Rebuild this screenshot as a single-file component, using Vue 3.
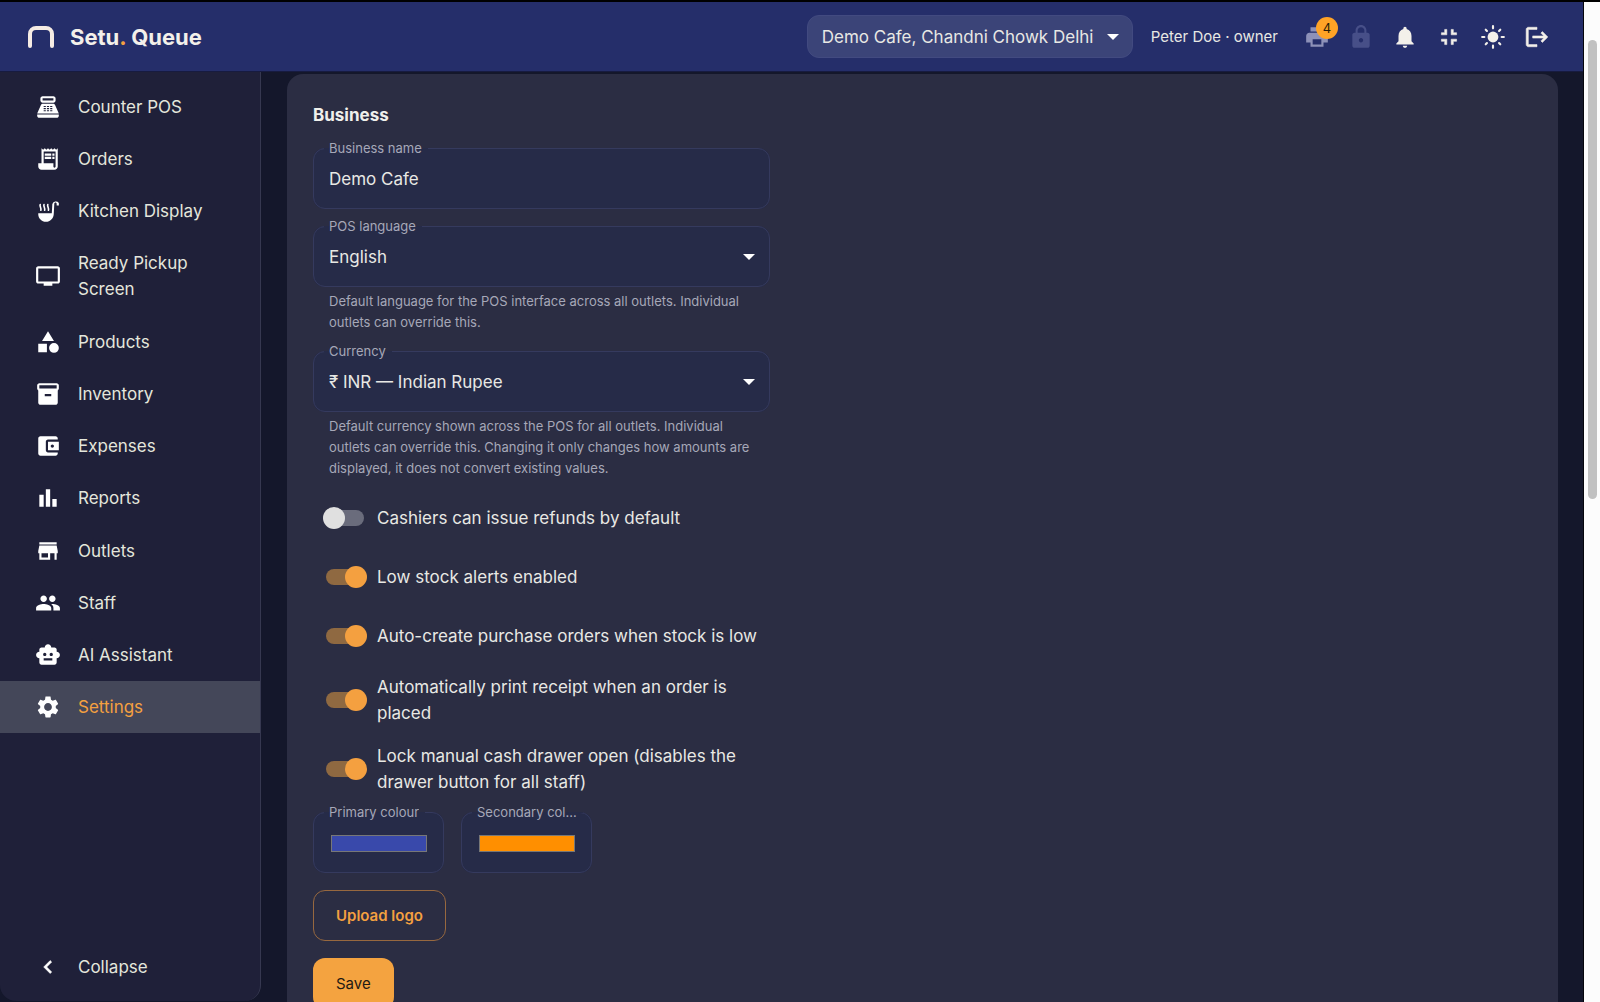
<script setup>
import { reactive, ref } from 'vue'

const navGroups = [
  [
    {
      label: 'Counter POS',
      path: 'M17 2H7c-1.1 0-2 .9-2 2v2c0 1.1.9 2 2 2h10c1.1 0 2-.9 2-2V4c0-1.1-.9-2-2-2m0 4H7V4h10zm3 16H4c-1.1 0-2-.9-2-2v-1h20v1c0 1.1-.9 2-2 2m-1.47-11.81C18.21 9.47 17.49 9 16.7 9H7.3c-.79 0-1.51.47-1.83 1.19L2 18h20zM8 11h2v1H8zm0 2h2v1H8zm0 2h2v1H8zm3-4h2v1h-2zm0 2h2v1h-2zm0 2h2v1h-2zm3-4h2v1h-2zm0 2h2v1h-2zm0 2h2v1h-2z'
    },
    {
      label: 'Orders',
      path: 'M19.5 3.5 18 2l-1.5 1.5L15 2l-1.5 1.5L12 2l-1.5 1.5L9 2 7.5 3.5 6 2v14H3v3c0 1.66 1.34 3 3 3h12c1.66 0 3-1.34 3-3V2zM19 19c0 .55-.45 1-1 1s-1-.45-1-1v-3H8V5h11zM9 7h6v2H9zm7 0h2v2h-2zm-7 3h6v2H9zm7 0h2v2h-2z'
    },
    {
      label: 'Kitchen Display',
      path: 'M3 14h12.500l.500-8.500A3.500 3.500 0 0 1 22 4.500V7h-2V5.500c0-.8-.5-1.300-1.100-1.300s-1.100.5-1.100 1.300L17.300 15c-.2 3.900-3.300 7-7.200 7S3 18.900 3 15z',
      lines: 'M4.800 6c-.8 1.700 1.300 3.300.6 5.300M8.300 6c-.8 1.700 1.300 3.300.6 5.300M11.800 6c-.8 1.700 1.300 3.300.6 5.300'
    },
    {
      label: 'Ready Pickup Screen',
      path: 'M21 3H3c-1.1 0-2 .9-2 2v12c0 1.1.9 2 2 2h5v2h8v-2h5c1.1 0 2-.9 2-2V5c0-1.1-.9-2-2-2m0 14H3V5h18z'
    }
  ],
  [
    {
      label: 'Products',
      path: 'm12 2-5.500 9h11zM3 13.500h8v8H3zM17.500 13a4.500 4.500 0 1 0 0 9 4.500 4.500 0 0 0 0-9z'
    },
    {
      label: 'Inventory',
      path: 'M20 2H4c-1 0-2 .9-2 2v3.010c0 .72.43 1.340 1 1.690V20c0 1.100 1.100 2 2 2h14c.9 0 2-.9 2-2V8.700c.57-.35 1-.97 1-1.690V4c0-1.100-1-2-2-2m-5 12H9v-2h6zm5-7H4V4h16z'
    },
    {
      label: 'Expenses',
      path: 'M21 18v1c0 1.100-.9 2-2 2H5c-1.110 0-2-.9-2-2V5c0-1.100.89-2 2-2h14c1.100 0 2 .9 2 2v1h-9c-1.110 0-2 .9-2 2v8c0 1.100.89 2 2 2zm-9-2h10V8H12zm4-2.500c-.83 0-1.500-.67-1.500-1.500s.67-1.500 1.500-1.500 1.500.67 1.500 1.500-.67 1.500-1.500 1.500'
    },
    { label: 'Reports', path: 'M4 9h4v11H4zm12 4h4v7h-4zm-6-9h4v16h-4z' }
  ],
  [
    {
      label: 'Outlets',
      path: 'M20 4H4v2h16zm1 10v-2l-1-5H4l-1 5v2h1v6h10v-6h4v6h2v-6zm-9 4H6v-4h6z'
    },
    {
      label: 'Staff',
      path: 'M16 11c1.660 0 2.990-1.340 2.990-3S17.660 5 16 5s-3 1.340-3 3 1.340 3 3 3m-8 0c1.660 0 2.990-1.340 2.990-3S9.660 5 8 5 5 6.340 5 8s1.340 3 3 3m0 2c-2.330 0-7 1.170-7 3.500V19h14v-2.500c0-2.330-4.670-3.500-7-3.500m8 0c-.29 0-.62.02-.97.05 1.160.84 1.970 1.970 1.970 3.450V19h6v-2.500c0-2.330-4.670-3.500-7-3.500'
    },
    {
      label: 'AI Assistant',
      path: 'M20 9V7c0-1.100-.9-2-2-2h-3c0-1.660-1.340-3-3-3S9 3.340 9 5H6c-1.100 0-2 .9-2 2v2c-1.660 0-3 1.340-3 3s1.340 3 3 3v4c0 1.100.9 2 2 2h12c1.100 0 2-.9 2-2v-4c1.660 0 3-1.340 3-3s-1.340-3-3-3M7.500 11.500c0-.83.67-1.500 1.500-1.500s1.500.67 1.500 1.500S9.830 13 9 13s-1.500-.67-1.500-1.500M16 17H8v-2h8zm-1-4c-.83 0-1.500-.67-1.500-1.500S14.170 10 15 10s1.500.67 1.500 1.500S15.830 13 15 13'
    },
    {
      label: 'Settings',
      active: true,
      path: 'M19.14 12.94c.04-.3.06-.61.06-.94 0-.32-.02-.64-.07-.94l2.03-1.58c.18-.14.23-.41.12-.61l-1.92-3.32c-.12-.22-.37-.29-.59-.22l-2.39.96c-.5-.38-1.03-.7-1.62-.94l-.36-2.54c-.04-.24-.24-.41-.48-.41h-3.84c-.24 0-.43.17-.47.41l-.36 2.54c-.59.24-1.13.57-1.62.94l-2.39-.96c-.22-.08-.47 0-.59.22L2.74 8.87c-.12.21-.08.47.12.61l2.03 1.58c-.05.3-.09.63-.09.94s.02.64.07.94l-2.03 1.58c-.18.14-.23.41-.12.61l1.92 3.32c.12.22.37.29.59.22l2.39-.96c.5.38 1.03.7 1.62.94l.36 2.54c.05.24.24.41.48.41h3.84c.24 0 .44-.17.47-.41l.36-2.54c.59-.24 1.13-.56 1.62-.94l2.39.96c.22.08.47 0 .59-.22l1.92-3.32c.12-.22.07-.47-.12-.61zM12 15.600c-1.980 0-3.600-1.620-3.600-3.600s1.620-3.600 3.600-3.600 3.600 1.620 3.600 3.600-1.620 3.600-3.600 3.600'
    }
  ]
]

const actions = [
  {
    label: 'Printer',
    tone: 'muted',
    badge: 4,
    path: 'M19 8H5c-1.660 0-3 1.340-3 3v6h4v4h12v-4h4v-6c0-1.660-1.340-3-3-3m-3 11H8v-5h8zm3-7c-.55 0-1-.45-1-1s.45-1 1-1 1 .45 1 1-.45 1-1 1m-1-9H6v4h12z'
  },
  {
    label: 'Lock',
    tone: 'faint',
    path: 'M18 8h-1V6c0-2.760-2.240-5-5-5S7 3.240 7 6v2H6c-1.100 0-2 .9-2 2v10c0 1.100.9 2 2 2h12c1.100 0 2-.9 2-2V10c0-1.100-.9-2-2-2m-6 9c-1.100 0-2-.9-2-2s.9-2 2-2 2 .9 2 2-.9 2-2 2m3.100-9H8.900V6c0-1.710 1.390-3.100 3.100-3.100s3.100 1.390 3.100 3.100z'
  },
  {
    label: 'Notifications',
    path: 'M12 22c1.100 0 2-.9 2-2h-4c0 1.100.89 2 2 2m6-6v-5c0-3.070-1.640-5.640-4.500-6.320V4c0-.83-.67-1.500-1.500-1.500s-1.500.67-1.500 1.500v.68C7.630 5.360 6 7.920 6 11v5l-2 2v1h16v-1z'
  },
  {
    label: 'Exit fullscreen',
    path: 'M5 16h3v3h2v-5H5zm3-8H5v2h5V5H8zm6 11h2v-3h3v-2h-5zm2-11V5h-2v5h5V8z',
    bold: true
  },
  {
    label: 'Light mode',
    path: 'M12 7a5 5 0 1 0 0 10 5 5 0 0 0 0-10z',
    lines: 'M2 12h2M20 12h2M12 2v2M12 20v2M5.300 5.300l1.100 1.100M17.600 17.600l1.100 1.100M5.300 18.700l1.100-1.100M17.600 6.400l1.100-1.100'
  },
  {
    label: 'Log out',
    path: 'm17 7-1.410 1.410L18.170 11H8v2h10.170l-2.580 2.580L17 17l5-5zM4 5h8V3H4c-1.100 0-2 .9-2 2v14c0 1.100.9 2 2 2h8v-2H4z',
    bold: true
  }
]

const businessName = ref('Demo Cafe')
const switches = reactive([
  { id: 'refunds', label: 'Cashiers can issue refunds by default', on: false },
  { id: 'low-stock', label: 'Low stock alerts enabled', on: true },
  { id: 'auto-po', label: 'Auto-create purchase orders when stock is low', on: true },
  { id: 'auto-print', label: 'Automatically print receipt when an order is placed', on: true },
  { id: 'lock-drawer', label: 'Lock manual cash drawer open (disables the drawer button for all staff)', on: true }
])
const colours = reactive([
  { id: 'primary', label: 'Primary colour', value: '#3949ab' },
  { id: 'secondary', label: 'Secondary colour', value: '#ff8f00' }
])
</script>

<template>
  <div class="window">
    <div class="app">
      <header class="topbar">
        <a class="brand" href="#">
          <svg class="brand-mark" viewBox="0 0 26 22" aria-hidden="true">
            <path d="M2 20V8a6 6 0 0 1 6-6h10a6 6 0 0 1 6 6v12" />
          </svg>
          <span>Setu<span class="dot">.</span> Queue</span>
        </a>
        <div class="select-wrap outlet">
          <select aria-label="Outlet">
            <option>Demo Cafe, Chandni Chowk Delhi</option>
          </select>
          <svg class="caret" viewBox="0 0 12 6" aria-hidden="true"><path d="M0 0h12L6 6z" /></svg>
        </div>
        <span class="user">Peter Doe · owner</span>
        <div class="actions">
          <button
            v-for="a in actions"
            :key="a.label"
            type="button"
            class="icon-button"
            :class="a.tone"
            :aria-label="a.label"
          >
            <svg class="icon" :class="{ bold: a.bold }" viewBox="0 0 24 24" aria-hidden="true">
              <path :d="a.path" />
              <path v-if="a.lines" class="stroke" :d="a.lines" />
            </svg>
            <span v-if="a.badge" class="badge">{{ a.badge }}</span>
          </button>
        </div>
      </header>

      <div class="body">
        <aside class="sidebar">
          <nav>
            <ul v-for="(group, i) in navGroups" :key="i">
              <li v-for="item in group" :key="item.label">
                <a class="nav-item" :class="{ active: item.active }" href="#">
                  <svg class="icon" viewBox="0 0 24 24" aria-hidden="true">
                    <path :d="item.path" fill-rule="evenodd" />
                    <path v-if="item.lines" class="stroke thin" :d="item.lines" />
                  </svg>
                  <span>{{ item.label }}</span>
                </a>
              </li>
            </ul>
          </nav>
          <button type="button" class="nav-item">
            <svg class="icon bold" viewBox="0 0 24 24" aria-hidden="true">
              <path d="M15.410 7.410 14 6l-6 6 6 6 1.410-1.410L10.830 12z" />
            </svg>
            <span>Collapse</span>
          </button>
        </aside>

        <main class="content">
          <section class="card">
            <h2>Business</h2>
            <form class="form" @submit.prevent>
              <fieldset class="field">
                <legend><label for="business-name">Business name</label></legend>
                <input id="business-name" v-model="businessName" type="text" />
              </fieldset>

              <div>
                <fieldset class="field">
                  <legend><label for="language">POS language</label></legend>
                  <div class="select-wrap">
                    <select id="language" aria-describedby="language-help">
                      <option>English</option>
                    </select>
                    <svg class="caret" viewBox="0 0 12 6" aria-hidden="true"><path d="M0 0h12L6 6z" /></svg>
                  </div>
                </fieldset>
                <p id="language-help" class="help">
                  Default language for the POS interface across all outlets. Individual outlets can override this.
                </p>
              </div>

              <div>
                <fieldset class="field">
                  <legend><label for="currency">Currency</label></legend>
                  <div class="select-wrap">
                    <select id="currency" aria-describedby="currency-help">
                      <option>₹ INR — Indian Rupee</option>
                    </select>
                    <svg class="caret" viewBox="0 0 12 6" aria-hidden="true"><path d="M0 0h12L6 6z" /></svg>
                  </div>
                </fieldset>
                <p id="currency-help" class="help">
                  Default currency shown across the POS for all outlets. Individual outlets can override this. Changing
                  it only changes how amounts are displayed, it does not convert existing values.
                </p>
              </div>

              <div v-for="s in switches" :key="s.id" class="switch-row">
                <input :id="s.id" v-model="s.on" class="switch" type="checkbox" role="switch" />
                <label :for="s.id">{{ s.label }}</label>
              </div>

              <div class="colours">
                <fieldset v-for="c in colours" :key="c.id" class="field colour">
                  <legend><label :for="c.id">{{ c.label }}</label></legend>
                  <input :id="c.id" v-model="c.value" type="color" />
                </fieldset>
              </div>

              <button type="button" class="btn outlined">Upload logo</button>
              <button type="submit" class="btn filled">Save</button>
            </form>
          </section>
        </main>
      </div>
    </div>
    <div class="scrollbar"><div class="thumb"></div></div>
  </div>
</template>

<style>
body {
  margin: 0;
  background: #14172b;
}
</style>

<style scoped>
* {
  box-sizing: border-box;
}

.window {
  display: flex;
  height: 100vh;
  overflow: hidden;
  border-top: 2px solid #000;
  color: #e8e8e4;
  font: 400 17px/26px Inter, "Noto Sans", sans-serif;
}

button,
input,
select {
  color: inherit;
  font: inherit;
}

.app {
  flex: 1;
  min-width: 0;
  display: flex;
  flex-direction: column;
  border-right: 1px solid #05060c;
  background: #14172b;
}

.scrollbar {
  flex: none;
  width: 16px;
  padding: 38px 3px 0 4px;
  background: #fcfcfc;
}

.thumb {
  height: 459px;
  border-radius: 5px;
  background: #c1c1c1;
}

.icon {
  flex: none;
  width: 26px;
  height: 26px;
  fill: currentColor;
}

.icon.bold {
  stroke: currentColor;
  stroke-width: 0.5;
}

.stroke {
  fill: none;
  stroke: currentColor;
  stroke-width: 2;
  stroke-linecap: round;
}

.stroke.thin {
  stroke-width: 1.5;
}

/* Top bar */
.topbar {
  flex: none;
  display: flex;
  align-items: center;
  height: 70px;
  padding: 0 24px 0 28px;
  border-bottom: 1px solid #171b40;
  background: #252e6a;
}

.brand {
  display: flex;
  align-items: center;
  gap: 16px;
  margin-right: auto;
  color: #f3f0ea;
  font-size: 22px;
  font-weight: 700;
  text-decoration: none;
}

.brand-mark {
  width: 26px;
  height: 22px;
  fill: none;
  stroke: #f6ece4;
  stroke-width: 4;
  stroke-linecap: round;
}

.dot {
  color: #f4a040;
}

.select-wrap {
  position: relative;
  display: flex;
  width: 100%;
}

select {
  width: 100%;
  margin: 0;
  border: 0;
  outline: 0;
  background: transparent;
  appearance: none;
  cursor: pointer;
}

.caret {
  position: absolute;
  top: 50%;
  right: 14px;
  width: 12px;
  height: 6px;
  margin-top: -3px;
  fill: #fff;
  pointer-events: none;
}

.outlet {
  width: 326px;
  margin-right: 18px;
}

.outlet select {
  height: 43px;
  padding: 0 36px 0 14px;
  border: 1px solid #424a80;
  border-radius: 12px;
  background: #3b4478;
}

.user {
  font-size: 15px;
  white-space: nowrap;
}

.actions {
  display: flex;
  margin-left: 17px;
}

.icon-button {
  position: relative;
  display: flex;
  justify-content: center;
  align-items: center;
  width: 44px;
  height: 44px;
  padding: 0;
  border: 0;
  background: transparent;
  color: #f3f0ea;
}

.icon-button.muted .icon {
  color: #8d91b8;
}

.icon-button.faint {
  color: #474f88;
}

.badge {
  position: absolute;
  top: 2px;
  right: 1px;
  width: 22px;
  border-radius: 11px;
  background: #ffa326;
  color: #2a1c08;
  font-size: 13px;
  line-height: 22px;
  text-align: center;
}

/* Sidebar */
.body {
  flex: 1;
  min-height: 0;
  display: flex;
}

.sidebar {
  flex: none;
  display: flex;
  flex-direction: column;
  justify-content: space-between;
  width: 261px;
  margin-bottom: 1px;
  padding: 9px 0 8px;
  border-right: 1px solid #363850;
  border-radius: 0 0 16px 16px;
  background: #1f2039;
}

nav {
  display: flex;
  flex-direction: column;
  gap: 1px;
}

ul {
  margin: 0;
  padding: 0;
  list-style: none;
}

.nav-item {
  display: flex;
  align-items: center;
  gap: 17px;
  width: 100%;
  padding: 13px 35px;
  border: 0;
  background: transparent;
  color: #e4e6dc;
  text-align: left;
  text-decoration: none;
}

.nav-item .icon {
  color: #fff;
}

.nav-item.active {
  background: #444759;
  color: #f4a040;
}

/* Settings card */
.content {
  flex: 1;
  min-width: 0;
  padding: 2px 25px 0 26px;
}

.card {
  padding: 25px 26px 200px;
  border-radius: 16px;
  background: #2b2d43;
}

h2 {
  margin: 0 0 17px;
  font-size: 17px;
  font-weight: 700;
  line-height: 32px;
  color: #f0f0ec;
}

.form {
  display: flex;
  flex-direction: column;
  align-items: stretch;
  gap: 17px;
  max-width: 457px;
}

.field {
  min-width: 0;
  height: 61px;
  margin: 0;
  padding: 0;
  border: 1px solid #353a5e;
  border-radius: 12px;
  background: #262b48;
}

legend {
  max-width: 100%;
  margin-left: 10px;
  padding: 0 6px 0 5px;
}

legend label {
  display: block;
  max-width: 100px;
  margin: -11px 0 -9px;
  overflow: hidden;
  color: #a6a8b8;
  font-size: 13px;
  line-height: 20px;
  text-overflow: ellipsis;
  white-space: nowrap;
}

.field input[type="text"],
.field select {
  width: 100%;
  height: 59px;
  padding: 0 15px;
  border: 0;
  outline: 0;
  background: transparent;
}

.help {
  margin: 4px 10px 1px 16px;
  color: #a6a8b8;
  font-size: 13px;
  line-height: 21px;
}

.switch-row {
  display: flex;
  align-items: center;
  gap: 13px;
  min-height: 42px;
  padding-left: 13px;
}

.switch {
  position: relative;
  flex: none;
  width: 38px;
  height: 16px;
  margin: 0;
  border-radius: 8px;
  background: #6a6c7c;
  appearance: none;
}

.switch::before {
  content: "";
  position: absolute;
  top: -3px;
  left: -3px;
  width: 22px;
  height: 22px;
  border-radius: 50%;
  background: #e0e0e0;
}

.switch:checked {
  background: #8f6941;
}

.switch:checked::before {
  left: 19px;
  background: #f4a040;
}

.colours {
  display: flex;
  gap: 17px;
}

.colour {
  width: 131px;
}

.colour input {
  display: block;
  width: 96px;
  height: 17px;
  margin: 22px 17px;
  padding: 0;
  border: 0;
  background: transparent;
  appearance: none;
}

.colour input::-webkit-color-swatch-wrapper {
  padding: 0;
}

.colour input::-webkit-color-swatch {
  border: 1px solid #777;
  border-radius: 0;
}

.btn {
  align-self: flex-start;
  height: 51px;
  padding: 0 22px;
  border: 1px solid transparent;
  border-radius: 12px;
  font-size: 15px;
}

.btn.outlined {
  border-color: #97683f;
  background: transparent;
  color: #f4a040;
  font-weight: 600;
}

.btn.filled {
  background: #f4a340;
  color: #1f1a14;
}
</style>
